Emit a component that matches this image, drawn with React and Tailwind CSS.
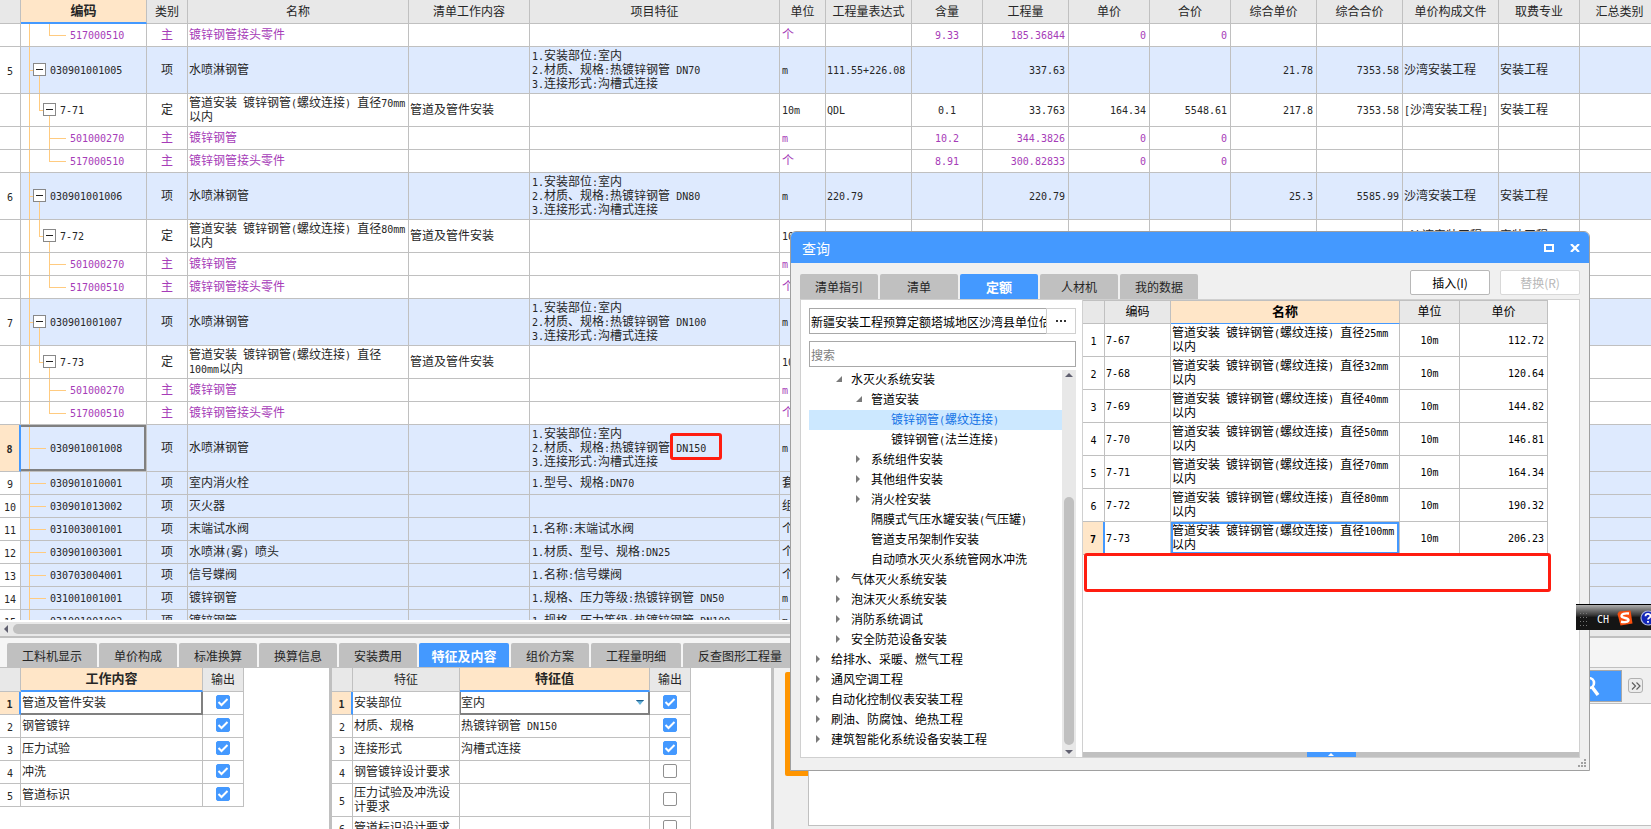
import { useState } from "react";
import { clsx } from "clsx";

const columns = [
  { title: "", width: "w-[21px]" },
  { title: "编码", width: "w-[126px]", active: true },
  { title: "类别", width: "w-[41px]" },
  { title: "名称", width: "w-[221px]" },
  { title: "清单工作内容", width: "w-[121px]" },
  { title: "项目特征", width: "w-[250px]" },
  { title: "单位", width: "w-[46px]" },
  { title: "工程量表达式", width: "w-[86px]" },
  { title: "含量", width: "w-[71px]" },
  { title: "工程量", width: "w-[86px]" },
  { title: "单价", width: "w-[81px]" },
  { title: "合价", width: "w-[81px]" },
  { title: "综合单价", width: "w-[86px]" },
  { title: "综合合价", width: "w-[86px]" },
  { title: "单价构成文件", width: "w-[96px]" },
  { title: "取费专业", width: "w-[81px]" },
  { title: "汇总类别", width: "w-auto" },
];

const feature = (dn) => `1.安装部位:室内\n2.材质、规格:热镀锌钢管 ${dn}\n3.连接形式:沟槽式连接`;

const rows = [
  { kind: "material", last: true, code: "517000510", name: "镀锌钢管接头零件", unit: "个", rate: "9.33", qty: "185.36844", price: "0", total: "0" },
  { kind: "item", no: 5, code: "030901001005", name: "水喷淋钢管", feature: feature("DN70"), unit: "m", expr: "111.55+226.08", qty: "337.63", cPrice: "21.78", cTotal: "7353.58", file: "沙湾安装工程", major: "安装工程" },
  { kind: "quota", code: "7-71", name: "管道安装 镀锌钢管(螺纹连接) 直径70mm\n以内", work: "管道及管件安装", unit: "10m", expr: "QDL", rate: "0.1", qty: "33.763", price: "164.34", total: "5548.61", cPrice: "217.8", cTotal: "7353.58", file: "[沙湾安装工程]", major: "安装工程" },
  { kind: "material", code: "501000270", name: "镀锌钢管", unit: "m", rate: "10.2", qty: "344.3826", price: "0", total: "0" },
  { kind: "material", last: true, code: "517000510", name: "镀锌钢管接头零件", unit: "个", rate: "8.91", qty: "300.82833", price: "0", total: "0" },
  { kind: "item", no: 6, code: "030901001006", name: "水喷淋钢管", feature: feature("DN80"), unit: "m", expr: "220.79", qty: "220.79", cPrice: "25.3", cTotal: "5585.99", file: "沙湾安装工程", major: "安装工程" },
  { kind: "quota", code: "7-72", name: "管道安装 镀锌钢管(螺纹连接) 直径80mm\n以内", work: "管道及管件安装", unit: "10m", file: "[沙湾安装工程]", major: "安装工程" },
  { kind: "material", code: "501000270", name: "镀锌钢管", unit: "m" },
  { kind: "material", last: true, code: "517000510", name: "镀锌钢管接头零件", unit: "个" },
  { kind: "item", no: 7, code: "030901001007", name: "水喷淋钢管", feature: feature("DN100"), unit: "m" },
  { kind: "quota", code: "7-73", name: "管道安装 镀锌钢管(螺纹连接) 直径\n100mm以内", work: "管道及管件安装", unit: "10m" },
  { kind: "material", code: "501000270", name: "镀锌钢管", unit: "m" },
  { kind: "material", last: true, code: "517000510", name: "镀锌钢管接头零件", unit: "个" },
  { kind: "leaf", no: 8, tall: true, selected: true, code: "030901001008", name: "水喷淋钢管", feature: feature("DN150"), unit: "m" },
  { kind: "leaf", no: 9, code: "030901010001", name: "室内消火栓", feature: "1.型号、规格:DN70", unit: "套" },
  { kind: "leaf", no: 10, code: "030901013002", name: "灭火器", unit: "组" },
  { kind: "leaf", no: 11, code: "031003001001", name: "末端试水阀", feature: "1.名称:末端试水阀", unit: "个" },
  { kind: "leaf", no: 12, code: "030901003001", name: "水喷淋(雾) 喷头", feature: "1.材质、型号、规格:DN25", unit: "个" },
  { kind: "leaf", no: 13, code: "030703004001", name: "信号蝶阀", feature: "1.名称:信号蝶阀", unit: "个" },
  { kind: "leaf", no: 14, code: "031001001001", name: "镀锌钢管", feature: "1.规格、压力等级:热镀锌钢管 DN50", unit: "m" },
  { kind: "leaf", no: 15, code: "031001001002", name: "镀锌钢管", feature: "1.规格、压力等级:热镀锌钢管 DN100", unit: "m" },
];

const detailTabs = [
  { title: "工料机显示", width: "w-[90px]" },
  { title: "单价构成", width: "w-[78px]" },
  { title: "标准换算", width: "w-[78px]" },
  { title: "换算信息", width: "w-[78px]" },
  { title: "安装费用", width: "w-[78px]" },
  { title: "特征及内容", width: "w-[90px]" },
  { title: "组价方案", width: "w-[78px]" },
  { title: "工程量明细", width: "w-[90px]" },
  { title: "反查图形工程量", width: "w-[114px]" },
];

const works = ["管道及管件安装", "钢管镀锌", "压力试验", "冲洗", "管道标识"];

const features = [
  { name: "安装部位", value: "室内", checked: true },
  { name: "材质、规格", value: "热镀锌钢管 DN150", checked: true },
  { name: "连接形式", value: "沟槽式连接", checked: true },
  { name: "钢管镀锌设计要求", value: "", checked: false },
  { name: "压力试验及冲洗设\n计要求", value: "", checked: false, tall: true },
  { name: "管道标识设计要求", value: "", checked: false },
];

const queryTabs = ["清单指引", "清单", "定额", "人材机", "我的数据"];

const tree = [
  { level: 1, state: "open", title: "水灭火系统安装" },
  { level: 2, state: "open", title: "管道安装" },
  { level: 3, title: "镀锌钢管(螺纹连接)" },
  { level: 3, title: "镀锌钢管(法兰连接)" },
  { level: 2, state: "closed", title: "系统组件安装" },
  { level: 2, state: "closed", title: "其他组件安装" },
  { level: 2, state: "closed", title: "消火栓安装" },
  { level: 2, title: "隔膜式气压水罐安装(气压罐)" },
  { level: 2, title: "管道支吊架制作安装" },
  { level: 2, title: "自动喷水灭火系统管网水冲洗" },
  { level: 1, state: "closed", title: "气体灭火系统安装" },
  { level: 1, state: "closed", title: "泡沫灭火系统安装" },
  { level: 1, state: "closed", title: "消防系统调试" },
  { level: 1, state: "closed", title: "安全防范设备安装" },
  { level: 0, state: "closed", title: "给排水、采暖、燃气工程" },
  { level: 0, state: "closed", title: "通风空调工程" },
  { level: 0, state: "closed", title: "自动化控制仪表安装工程" },
  { level: 0, state: "closed", title: "刷油、防腐蚀、绝热工程" },
  { level: 0, state: "closed", title: "建筑智能化系统设备安装工程" },
];

const indents = ["pl-1.5", "pl-[26px]", "pl-[46px]", "pl-[66px]"];

const quotas = [
  ["7-67", "25mm", "112.72"],
  ["7-68", "32mm", "120.64"],
  ["7-69", "40mm", "144.82"],
  ["7-70", "50mm", "146.81"],
  ["7-71", "70mm", "164.34"],
  ["7-72", "80mm", "190.32"],
  ["7-73", "100mm", "206.23"],
];

// Latin runs are set in a mono face half as wide as a Chinese character
function Txt({ children }) {
  const parts = String(children ?? "").split(/([\x20-\x7e]+)/);
  return (
    <span className="whitespace-pre">
      {parts.map((part, i) =>
        i % 2 ? (
          <span key={i} className="font-['DejaVu_Sans_Mono',monospace] text-[10px] leading-none">{part}</span>
        ) : (
          part
        )
      )}
    </span>
  );
}

function Th({ active, className, children }) {
  return (
    <th
      className={clsx(
        "border-r border-r-[#c0c0c0] px-0 pt-0 pb-0.5 text-center",
        active
          ? "border-b-2 border-b-[#4499ff] bg-[#ffe6c8] text-[13px] font-bold"
          : "border-b border-b-[#c0c0c0] bg-[#e8e8e8] font-normal",
        className
      )}
    >
      {children}
    </th>
  );
}

function Td({ className, children }) {
  return <td className={clsx("border-r border-b border-[#c0c0c0] pt-0 pb-0.5", className || "px-0")}>{children}</td>;
}

function NumCell({ active, children }) {
  return (
    <td
      className={clsx(
        "border-b border-b-[#c0c0c0] p-0 text-center",
        active ? "border-r-2 border-r-[#4499ff] bg-[#ffe6c8] font-bold" : "border-r border-r-[#c0c0c0] bg-white"
      )}
    >
      <Txt>{children}</Txt>
    </td>
  );
}

function Guides({ kind, last }) {
  return (
    <svg className="absolute inset-0 h-full w-full" stroke="#ffcb80" shapeRendering="crispEdges">
      <line x1="8.5" y1="0" x2="8.5" y2="100%" />
      {kind === "item" && (
        <>
          <line x1="8" y1="50%" x2="13" y2="50%" />
          <line x1="18.5" y1="50%" x2="18.5" y2="100%" />
        </>
      )}
      {kind === "quota" && (
        <>
          <line x1="18.5" y1="0" x2="18.5" y2="50%" />
          <line x1="18" y1="50%" x2="24" y2="50%" />
          <line x1="28.5" y1="50%" x2="28.5" y2="100%" />
        </>
      )}
      {kind === "material" && (
        <>
          <line x1="28.5" y1="0" x2="28.5" y2={last ? "50%" : "100%"} />
          <line x1="28" y1="50%" x2="45" y2="50%" />
        </>
      )}
      {kind === "leaf" && <line x1="8" y1="50%" x2="25" y2="50%" />}
    </svg>
  );
}

function CodeCell({ row }) {
  const foldable = row.kind === "item" || row.kind === "quota";
  const indent = { item: "pl-3", quota: "pl-[22px]", material: "pl-[49px]", leaf: "pl-[29px]" }[row.kind];
  return (
    <Td className="relative px-0">
      <Guides kind={row.kind} last={row.last} />
      <div className={clsx("relative flex items-center gap-1", indent)}>
        {foldable && (
          <button
            type="button"
            aria-label="折叠"
            className="flex size-[13px] items-center justify-center border border-[#888888] bg-white"
          >
            <span className="h-px w-[7px] bg-[#222222]" />
          </button>
        )}
        <Txt>{row.code}</Txt>
      </div>
      {row.selected && <div className="absolute inset-0 border-2 border-l-0 border-[#808080]" />}
    </Td>
  );
}

function BillTable() {
  const kinds = { material: "主", item: "项", quota: "定", leaf: "项" };
  return (
    <table className="w-full min-w-[1660px] table-fixed border-separate border-spacing-0">
      <thead>
        <tr className="h-6">
          {columns.map((col) => (
            <Th key={col.title} active={col.active} className={col.width}>{col.title}</Th>
          ))}
        </tr>
      </thead>
      <tbody>
        {rows.map((row, i) => (
          <tr
            key={i}
            className={clsx(
              row.kind === "item" || row.tall ? "h-[47px]" : row.kind === "quota" ? "h-[33px]" : "h-[23px]",
              (row.kind === "item" || row.kind === "leaf") && "bg-[#deeafe]",
              row.kind === "material" && "text-[#a63cb8]"
            )}
          >
            <NumCell active={row.selected}>{row.no}</NumCell>
            <CodeCell row={row} />
            <Td className="px-0 text-center">{kinds[row.kind]}</Td>
            <Td className="px-px"><Txt>{row.name}</Txt></Td>
            <Td className="px-px"><Txt>{row.work}</Txt></Td>
            <Td className="relative px-0.5">
              <Txt>{row.feature}</Txt>
              {row.selected && (
                <div className="absolute top-2 left-[140px] h-[27px] w-[52px] rounded-[3px] border-3 border-[#ff1d10]" />
              )}
            </Td>
            <Td className="px-0.5"><Txt>{row.unit}</Txt></Td>
            <Td className="px-px"><Txt>{row.expr}</Txt></Td>
            <Td className="px-0 text-center"><Txt>{row.rate}</Txt></Td>
            <Td className="px-[3px] text-right"><Txt>{row.qty}</Txt></Td>
            <Td className="px-[3px] text-right"><Txt>{row.price}</Txt></Td>
            <Td className="px-[3px] text-right"><Txt>{row.total}</Txt></Td>
            <Td className="px-[3px] text-right"><Txt>{row.cPrice}</Txt></Td>
            <Td className="px-[3px] text-right"><Txt>{row.cTotal}</Txt></Td>
            <Td className="px-px"><Txt>{row.file}</Txt></Td>
            <Td className="px-px"><Txt>{row.major}</Txt></Td>
            <Td />
          </tr>
        ))}
      </tbody>
    </table>
  );
}

function Check({ label, defaultChecked }) {
  return (
    <label className="relative mx-auto block size-3.5">
      <input
        type="checkbox"
        aria-label={label}
        defaultChecked={defaultChecked}
        className="peer block size-3.5 appearance-none rounded-xs border border-[#909090] bg-white checked:border-[#4499ff] checked:bg-[#4499ff]"
      />
      <svg
        viewBox="0 0 14 14"
        className="pointer-events-none absolute inset-0 hidden size-3.5 peer-checked:block"
        fill="none"
        stroke="#ffffff"
        strokeWidth="2"
      >
        <path d="M2.5 7l3 3 6-6" />
      </svg>
    </label>
  );
}

function WorkTable() {
  return (
    <table className="w-[244px] table-fixed border-separate border-spacing-0">
      <thead>
        <tr className="h-6">
          <Th className="w-[21px]" />
          <Th active className="w-[182px]">工作内容</Th>
          <Th className="w-[41px]">输出</Th>
        </tr>
      </thead>
      <tbody>
        {works.map((work, i) => (
          <tr key={work} className="h-[23px]">
            <NumCell active={i === 0}>{i + 1}</NumCell>
            <Td className={clsx("px-px", i === 0 && "border-r-2 border-b-2 border-[#808080]!")}>{work}</Td>
            <Td><Check label={work} defaultChecked /></Td>
          </tr>
        ))}
      </tbody>
    </table>
  );
}

function FeatureTable() {
  return (
    <table className="w-[359px] table-fixed border-separate border-spacing-0">
      <thead>
        <tr className="h-6">
          <Th className="w-[21px]" />
          <Th className="w-[107px]">特征</Th>
          <Th active className="w-[190px]">特征值</Th>
          <Th className="w-[41px]">输出</Th>
        </tr>
      </thead>
      <tbody>
        {features.map((item, i) => (
          <tr key={item.name} className={item.tall ? "h-[33px]" : "h-[23px]"}>
            <NumCell active={i === 0}>{i + 1}</NumCell>
            <Td className="px-px"><Txt>{item.name}</Txt></Td>
            {i === 0 ? (
              <Td className="relative border-r-2 border-b-2 border-l border-[#808080]! px-0">
                <select aria-label={item.name} className="block w-full appearance-none outline-none">
                  <option>{item.value}</option>
                </select>
                <svg viewBox="0 0 8 5" className="pointer-events-none absolute top-2 right-1 h-[5px] w-2">
                  <path d="M0 0h8L4 5z" fill="#67b3dc" />
                  <path d="M0 0h8L7 1.2H1z" fill="#1f5f8b" />
                </svg>
              </Td>
            ) : (
              <Td className="px-px"><Txt>{item.value}</Txt></Td>
            )}
            <Td><Check label={item.name} defaultChecked={item.checked} /></Td>
          </tr>
        ))}
      </tbody>
    </table>
  );
}

function DetailPane() {
  const [tab, setTab] = useState("特征及内容");
  return (
    <div className="flex h-[193px] shrink-0 flex-col border-t-2 border-[#c0c0c0] bg-[#f5f5f5]">
      <div className="flex gap-0.5 border-b border-[#c0c0c0] pt-[5px] pl-[7px]">
        {detailTabs.map(({ title, width }) => (
          <button
            key={title}
            type="button"
            onClick={() => setTab(title)}
            className={clsx(
              "h-6 rounded-t-xs pt-0.5",
              width,
              tab === title ? "bg-[#4499ff] text-[13px] font-bold text-white" : "bg-[#c0c0c0]"
            )}
          >
            {title}
          </button>
        ))}
      </div>
      <div className="flex min-h-0 flex-1">
        <div className="w-[332px] shrink-0 overflow-hidden border-r-3 border-[#c0c0c0] bg-white">
          <WorkTable />
        </div>
        <div className="w-[442px] shrink-0 overflow-hidden border-r-3 border-[#c0c0c0] bg-white">
          <FeatureTable />
        </div>
        <div className="relative flex flex-1 flex-col bg-[#f0f0f0] pb-[3px] pl-[34px]">
          <div className="absolute top-1 left-[11px] h-[104px] w-24 rounded-xs bg-[#ff9500]" />
          <div className="flex h-9 items-center justify-end gap-1.5 border-b border-[#c0c0c0] pr-2">
            <button
              type="button"
              aria-label="搜索"
              className="flex h-8 w-12 items-center border border-[#a8a8a8] bg-[#4499ff] pl-2"
            >
              <svg viewBox="0 0 20 22" className="h-[22px] w-5" fill="none" stroke="#ffffff" strokeWidth="2.6">
                <circle cx="6" cy="8" r="5" />
                <path d="M9 12l6 8" strokeWidth="3.4" />
              </svg>
            </button>
            <button
              type="button"
              aria-label="更多"
              className="flex size-[15px] items-center justify-center rounded-[3px] border border-[#b0b0b0] bg-[#ececec]"
            >
              <svg viewBox="0 0 10 8" className="h-2 w-2.5" fill="none" stroke="#606060" strokeWidth="1.2">
                <path d="M1 .5L4.500 4 1 7.500M5.500 .5L9 4 5.500 7.500" />
              </svg>
            </button>
          </div>
          <div className="relative flex-1 border-b border-l border-[#c0c0c0] bg-white" />
        </div>
      </div>
    </div>
  );
}

function TreeArrow({ state }) {
  return (
    <svg viewBox="0 0 8 8" className="size-2 shrink-0" fill="#7a7a7a">
      {state === "open" && <path d="M7 1v6H1z" />}
      {state === "closed" && <path d="M1 0l4 4-4 4z" />}
    </svg>
  );
}

function QuotaTree() {
  const [current, setCurrent] = useState("镀锌钢管(螺纹连接)");
  return (
    <div className="flex w-[282px] shrink-0 flex-col border-r border-[#d0d0d0] pt-2 pr-1.5 pl-2">
      <div className="flex h-[26px] shrink-0">
        <input
          aria-label="定额库"
          readOnly
          value="新疆安装工程预算定额塔城地区沙湾县单位估价表"
          className="min-w-0 flex-1 border border-r-0 border-[#a8a8a8] pt-0.5 pl-px outline-none"
        />
        <button type="button" aria-label="选择定额库" className="flex w-[30px] items-center justify-center gap-0.5 border border-[#d0d0d0]">
          <i className="size-0.5 bg-[#333333]" />
          <i className="size-0.5 bg-[#333333]" />
          <i className="size-0.5 bg-[#333333]" />
        </button>
      </div>
      <input
        aria-label="搜索"
        placeholder="搜索"
        className="mt-[7px] h-[26px] shrink-0 border border-[#a8a8a8] pl-px outline-none placeholder:text-[#808080]"
      />
      <div className="mt-[3px] flex min-h-0 flex-1">
        <ul className="flex-1 overflow-hidden">
          {tree.map((node) => (
            <li
              key={node.title}
              onClick={() => setCurrent(node.title)}
              className={clsx(
                "flex h-5 items-center gap-2 pb-0.5",
                indents[node.level],
                current === node.title && "bg-[#cce8ff] text-[#1473e6]"
              )}
            >
              <TreeArrow state={node.state} />
              <Txt>{node.title}</Txt>
            </li>
          ))}
        </ul>
        <div className="flex w-3.5 flex-col items-center justify-between bg-[#e8e8e8] py-[3px]">
          <svg viewBox="0 0 8 4" className="h-1 w-2" fill="#606070"><path d="M4 0l4 4H0z" /></svg>
          <div className="mt-auto mb-[5px] h-[248px] w-2.5 rounded-full bg-[#c0c0c0]" />
          <svg viewBox="0 0 8 4" className="h-1 w-2" fill="#606070"><path d="M0 0h8L4 4z" /></svg>
        </div>
      </div>
    </div>
  );
}

function QuotaTable() {
  return (
    <table className="w-[465px] table-fixed border-separate border-spacing-0">
      <thead>
        <tr className="h-6">
          <Th className="w-[22px] border-t border-t-[#c0c0c0]" />
          <Th className="w-[66px] border-t border-t-[#c0c0c0]">编码</Th>
          <Th active className="w-[229px] border-t border-b! border-t-[#c0c0c0]">名称</Th>
          <Th className="w-[60px] border-t border-t-[#c0c0c0]">单位</Th>
          <Th className="w-[88px] border-t border-t-[#c0c0c0]">单价</Th>
        </tr>
      </thead>
      <tbody>
        {quotas.map(([code, size, price], i) => {
          const active = code === "7-73";
          return (
            <tr key={code} className="h-[33px]">
              <NumCell active={active}>{i + 1}</NumCell>
              <Td className="px-px"><Txt>{code}</Txt></Td>
              <Td className="relative px-px">
                <Txt>{`管道安装 镀锌钢管(螺纹连接) 直径${size}\n以内`}</Txt>
                {active && <div className="absolute inset-0 border-2 border-[#4499ff]" />}
              </Td>
              <Td className="px-0 text-center"><Txt>10m</Txt></Td>
              <Td className="px-[3px] text-right"><Txt>{price}</Txt></Td>
            </tr>
          );
        })}
      </tbody>
    </table>
  );
}

function QueryWindow() {
  const [tab, setTab] = useState("定额");
  return (
    <div className="absolute top-[231px] left-[790px] flex h-[540px] w-[800px] flex-col rounded-t-md border border-[#a0a0a0] bg-[#f0f0f0] text-black">
      <div className="flex h-[31px] shrink-0 items-center justify-between rounded-t-[5px] bg-[#4499ff] pr-[9px] pl-[11px] text-white">
        <h2 className="text-sm">查询</h2>
        <div className="flex items-center gap-4">
          <button type="button" aria-label="最大化" className="h-2 w-2.5 border-2 border-white" />
          <button type="button" aria-label="关闭">
            <svg viewBox="0 0 10 8" className="h-2 w-2.5" stroke="#ffffff" strokeWidth="2.2">
              <path d="M1 0l8 8M9 0L1 8" />
            </svg>
          </button>
        </div>
      </div>
      <div className="flex h-9 shrink-0 items-end justify-between px-[9px]">
        <div className="flex gap-0.5">
          {queryTabs.map((title) => (
            <button
              key={title}
              type="button"
              onClick={() => setTab(title)}
              className={clsx(
                "h-[25px] w-[78px] rounded-t-xs",
                tab === title ? "bg-[#4499ff] text-[13px] font-bold text-white" : "bg-[#c0c0c0] text-[#262626]"
              )}
            >
              {title}
            </button>
          ))}
        </div>
        <div className="flex gap-2.5 pb-1">
          <button type="button" className="h-[25px] w-20 rounded-xs border border-[#b8b8b8] bg-white">插入(I)</button>
          <button type="button" disabled className="h-[25px] w-20 rounded-xs border border-[#d8d8d8] bg-white text-[#b8b8b8]">
            替换(R)
          </button>
        </div>
      </div>
      <div className="mx-[9px] mb-3 flex min-h-0 flex-1 border border-[#d0d0d0] bg-white">
        <QuotaTree />
        <div className="relative flex flex-1 flex-col justify-between">
          <QuotaTable />
          <div className="absolute top-[253px] left-px h-[39px] w-[467px] rounded-[3px] border-3 border-[#ff1d10] bg-white" />
          <div className="flex h-[5px] justify-center bg-[#c0c0c0]">
            <button type="button" aria-label="展开" className="flex w-[49px] items-center justify-center bg-[#4499ff]">
              <svg viewBox="0 0 6 3" className="h-[3px] w-1.5" fill="#ffffff"><path d="M3 0l3 3H0z" /></svg>
            </button>
          </div>
        </div>
      </div>
      <svg viewBox="0 0 8 8" className="absolute right-[3px] bottom-[3px] size-2" fill="#a0a0a0">
        <path d="M6 0h2v2H6zM3 3h2v2H3zM6 3h2v2H6zM0 6h2v2H0zM3 6h2v2H3zM6 6h2v2H6z" />
      </svg>
    </div>
  );
}

function ImeBar() {
  return (
    <div className="absolute top-[604px] right-0 flex h-[26px] w-[75px] items-center overflow-hidden border-t border-black bg-linear-to-b from-[#b0b0b0] via-[#3a3a3a] via-40% to-[#151515] to-50% pl-1 text-white">
      <svg viewBox="0 0 8 18" className="h-[18px] w-2 shrink-0" fill="#777777">
        {[0, 4, 8, 12, 16].map((y) => (
          <path key={y} d={`M0 ${y}h1v1H0zM3 ${y}h1v1H3zM6 ${y}h1v1H6z`} />
        ))}
      </svg>
      <span className="ml-[9px]"><Txt>CH</Txt></span>
      <svg viewBox="0 0 16 16" className="ml-2 size-4 shrink-0">
        <path d="M2 1.500L13.500 .5l2 13L3.500 15.500 .5 4z" fill="#fa4f0e" />
        <path d="M12 3.500C7 3 4.500 4 4.500 6c0 2.500 7 1.500 7 4 0 2-4 2.500-7.500 1.800" fill="none" stroke="#ffffff" strokeWidth="2.400" />
      </svg>
      <svg viewBox="0 0 16 16" className="ml-[7px] size-4 shrink-0">
        <circle cx="8" cy="8" r="7" fill="#1226b8" stroke="#a8b0d8" strokeWidth="1.200" />
        <path d="M5.500 6.200C5.500 3.200 10.500 3.200 10.500 6c0 1.800-2.500 1.800-2.500 3.600M8 11v1.800" fill="none" stroke="#ffffff" strokeWidth="1.800" />
      </svg>
    </div>
  );
}

export default function App() {
  return (
    <div className="relative flex h-screen w-full flex-col overflow-hidden bg-white font-['Noto_Sans_CJK_SC',sans-serif] text-[12px] leading-[14px] text-[#262626]">
      <div className="min-h-0 flex-1 pb-0.5">
        <div className="h-full overflow-hidden">
          <BillTable />
        </div>
      </div>
      {/* horizontal scrollbar */}
      <div className="flex h-3.5 shrink-0 items-center bg-[#e8e8e8] pl-1">
        <svg viewBox="0 0 4 8" className="mr-[5px] h-2 w-1" fill="#606070"><path d="M4 0v8L0 4z" /></svg>
        <div className="h-2.5 w-[1200px] rounded-full bg-[#c0c0c0]" />
      </div>
      <DetailPane />
      <QueryWindow />
      <ImeBar />
    </div>
  );
}
